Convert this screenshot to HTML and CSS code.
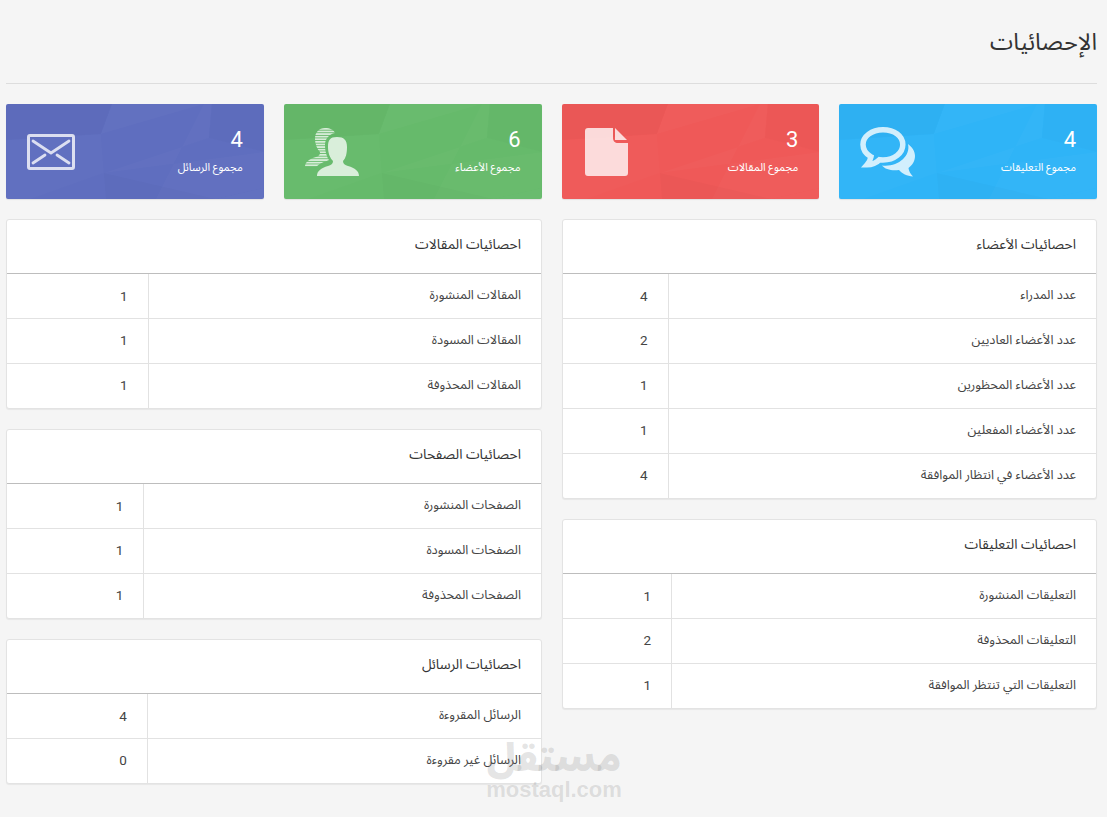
FILE: index.html
```html
<!DOCTYPE html>
<html lang="ar" dir="rtl">
<head>
<meta charset="utf-8">
<title>الإحصائيات</title>
<link rel="stylesheet" href="styles.css">
</head>
<body>
<svg class="defs" width="0" height="0" aria-hidden="true">
  <symbol id="poly" viewBox="0 0 258 95" preserveAspectRatio="none">
    <polygon points="0,0 106,0 95,30 0,36" fill="#000" opacity=".018"/>
    <polygon points="106,0 198,0 95,30" fill="#fff" opacity=".025"/>
    <polygon points="198,0 206,0 203,34 98,69 258,48 258,84 210,95 150,95" fill="#fff" opacity=".02"/>
    <polygon points="206,0 258,0 258,48 203,34" fill="#000" opacity=".012"/>
    <polygon points="98,69 210,95 100,95" fill="#000" opacity=".015"/>
    <polygon points="0,36 95,30 98,69 25,95 0,95" fill="#fff" opacity=".014"/>
    <polygon points="258,84 258,95 210,95" fill="#fff" opacity=".025"/>
  </symbol>
</svg>
<header class="page-head"><h1 class="page-title">الإحصائيات</h1></header>

<section class="cards">
  <div class="card blue">
    <svg class="poly"><use href="#poly"/></svg>
    <div class="card-text"><div class="card-num">4</div><div class="card-label">مجموع التعليقات</div></div>
    <svg class="card-icon" viewBox="0 0 56 50" width="56" height="50">
      <path fill="none" stroke="currentColor" stroke-width="5.500" d="M23 2.800C11.500 2.800 3 9.500 3 17.500c0 5 3 9.500 8 12.300-.5 3-2 5.700-4 8 5 0 9.500-2 12.500-5 1.200.2 2.300.2 3.500.2 11.500 0 19.800-7 19.800-15.500S34.500 2.800 23 2.800z"/>
      <path fill="currentColor" d="M48 17c4 3 7 7 7 12 0 5-2.500 9-6.500 12 .3 3 2 6 4.500 8.500-6-.5-11-3-14-6.500-7 1-14-.5-17-4.500 15 2 29-9 26-21.500z"/>
    </svg>
  </div>
  <div class="card red">
    <svg class="poly"><use href="#poly"/></svg>
    <div class="card-text"><div class="card-num">3</div><div class="card-label">مجموع المقالات</div></div>
    <svg class="card-icon file" viewBox="0 0 43 48" width="43" height="48">
      <path fill="currentColor" d="M3 0h25v10c0 3 2 5 5 5h10v30c0 2-1 3-3 3H3c-2 0-3-1-3-3V3c0-2 1-3 3-3z"/>
      <path fill="currentColor" d="M30 0l12 12H30z"/>
    </svg>
  </div>
  <div class="card green">
    <svg class="poly"><use href="#poly"/></svg>
    <div class="card-text"><div class="card-num">6</div><div class="card-label">مجموع الأعضاء</div></div>
    <svg class="card-icon person" viewBox="0 0 54 48" width="54" height="48">
      <defs><pattern id="stripes" width="4" height="2.600" patternUnits="userSpaceOnUse"><rect width="4" height="1.700" fill="currentColor"/></pattern></defs>
      <path fill="url(#stripes)" d="M20 0c5 0 9 2 10 5-6 1-10 6-10 12 0 7 2 12 4 15-5 2-9 3-13 7H0c0-5 4-8 11-10 3-1 4-2 4-5-3-3-5-8-5-13 0-7 4-11 10-11z"/>
      <path fill="currentColor" d="M32 9c7 0 10 3 10 10 0 6-1 11-4 14 0 3 2 4 5 5 7 2 11 5 11 10H12c0-5 4-8 11-10 3-1 5-2 5-5-3-3-5-8-5-14 0-7 2-10 9-10z"/>
    </svg>
  </div>
  <div class="card indigo">
    <svg class="poly"><use href="#poly"/></svg>
    <div class="card-text"><div class="card-num">4</div><div class="card-label">مجموع الرسائل</div></div>
    <svg class="card-icon mail" viewBox="0 0 48 36" width="48" height="36">
      <rect x="1.500" y="1.500" width="45" height="33" rx="1.500" fill="none" stroke="currentColor" stroke-width="3"/>
      <path fill="none" stroke="currentColor" stroke-width="2.800" stroke-linecap="round" stroke-linejoin="round" d="M6 7l18 12L42 7M6 29l12-8M42 29l-12-8"/>
    </svg>
  </div>
</section>

<main class="columns">
  <div class="column">
    <section class="panel">
      <h2 class="panel-title">احصائيات الأعضاء</h2>
      <table class="stats">
        <tr><td>عدد المدراء</td><td class="val">4</td></tr>
        <tr><td>عدد الأعضاء العاديين</td><td class="val">2</td></tr>
        <tr><td>عدد الأعضاء المحظورين</td><td class="val">1</td></tr>
        <tr><td>عدد الأعضاء المفعلين</td><td class="val">1</td></tr>
        <tr><td>عدد الأعضاء في انتظار الموافقة</td><td class="val">4</td></tr>
      </table>
    </section>
    <section class="panel">
      <h2 class="panel-title">احصائيات التعليقات</h2>
      <table class="stats">
        <tr><td>التعليقات المنشورة</td><td class="val">1</td></tr>
        <tr><td>التعليقات المحذوفة</td><td class="val">2</td></tr>
        <tr><td>التعليقات التي تنتظر الموافقة</td><td class="val">1</td></tr>
      </table>
    </section>
  </div>
  <div class="column">
    <section class="panel">
      <h2 class="panel-title">احصائيات المقالات</h2>
      <table class="stats">
        <tr><td>المقالات المنشورة</td><td class="val">1</td></tr>
        <tr><td>المقالات المسودة</td><td class="val">1</td></tr>
        <tr><td>المقالات المحذوفة</td><td class="val">1</td></tr>
      </table>
    </section>
    <section class="panel">
      <h2 class="panel-title">احصائيات الصفحات</h2>
      <table class="stats">
        <tr><td>الصفحات المنشورة</td><td class="val">1</td></tr>
        <tr><td>الصفحات المسودة</td><td class="val">1</td></tr>
        <tr><td>الصفحات المحذوفة</td><td class="val">1</td></tr>
      </table>
    </section>
    <section class="panel">
      <h2 class="panel-title">احصائيات الرسائل</h2>
      <table class="stats">
        <tr><td>الرسائل المقروءة</td><td class="val">4</td></tr>
        <tr><td>الرسائل غير مقروءة</td><td class="val">0</td></tr>
      </table>
    </section>
  </div>
</main>

<div class="watermark" aria-hidden="true">
  <div class="wm-ar">مستقل</div>
  <div class="wm-en">mostaql.com</div>
</div>
</body>
</html>
```

FILE: styles.css
```css
* { box-sizing: border-box; }
html, body { margin: 0; padding: 0; }
body {
  position: relative;
  height: 817px;
  overflow: hidden;
  padding: 0 10px 0 6px;
  background: #f5f5f5;
  color: #333;
  font-family: Roboto, "Noto Sans Arabic", "DejaVu Sans", sans-serif;
  font-size: 13px;
}
.defs { position: absolute; }
.page-head {
  height: 84px;
  padding-top: 24px;
  border-bottom: 1px solid #ddd;
}
.page-title {
  margin: 0;
  font-size: 23.400px;
  font-weight: 400;
  line-height: 36px;
  color: #333;
}
.cards {
  display: grid;
  grid-template-columns: repeat(4, 1fr);
  gap: 20px;
  margin-top: 20px;
}
.card {
  position: relative;
  display: flex;
  align-items: center;
  justify-content: space-between;
  height: 95px;
  padding: 0 21px 0 21px;
  border-radius: 2px;
  overflow: hidden;
  color: #fff;
  box-shadow: 0 1px 1px rgba(0,0,0,.08);
}
.blue { background: #2fb4f7; }
.red { background: #ef5958; }
.green { background: #66ba6b; }
.indigo { background: #5f6ebf; }
.poly { position: absolute; inset: 0; width: 100%; height: 100%; }
.card-text { position: relative; padding-top: 2px; }
.card-num { font-size: 22px; line-height: 26px; margin-top: -2px; }
.card-label { font-size: 11px; line-height: 16px; margin-top: 7px; }
.card-icon { position: relative; color: rgba(255,255,255,.78); }
.card-icon.file { margin-left: 2px; }
.card-icon.person { color: rgba(255,255,255,.75); }
.columns {
  display: grid;
  grid-template-columns: 535px 536px;
  gap: 20px;
  margin-top: 20px;
  align-items: start;
}
.column { display: flex; flex-direction: column; gap: 20px; }
.panel {
  background: #fff;
  border: 1px solid #e3e3e3;
  border-radius: 3px;
  box-shadow: 0 1px 1px rgba(0,0,0,.06);
}
.panel-title {
  margin: 0;
  height: 54px;
  padding: 0 20px;
  border-bottom: 1px solid #bdbdbd;
  font-size: 13.800px;
  font-weight: 400;
  line-height: 48px;
  color: #333;
}
.stats { width: 100%; border-collapse: collapse; }
.stats td {
  height: 45px;
  padding: 0 20px 2px;
  border-top: 1px solid #e2e2e2;
  font-size: 12.800px;
  color: #444;
}
.stats tr:first-child td { border-top: 0; height: 44px; }
.stats tr:first-child .val { padding-bottom: 0; }
.stats .val { border-right: 1px solid #e2e2e2; font-size: 13.500px; }
.watermark {
  position: absolute;
  left: 486px;
  top: 737px;
  width: 136px;
  text-align: center;
  color: rgba(120,120,120,.2);
  font-weight: 900;
  direction: ltr;
}
.wm-ar { font-size: 38px; line-height: 42px; }
.wm-en { font-size: 22px; line-height: 22px; font-weight: 700; font-family: "Liberation Sans", sans-serif; }
```
